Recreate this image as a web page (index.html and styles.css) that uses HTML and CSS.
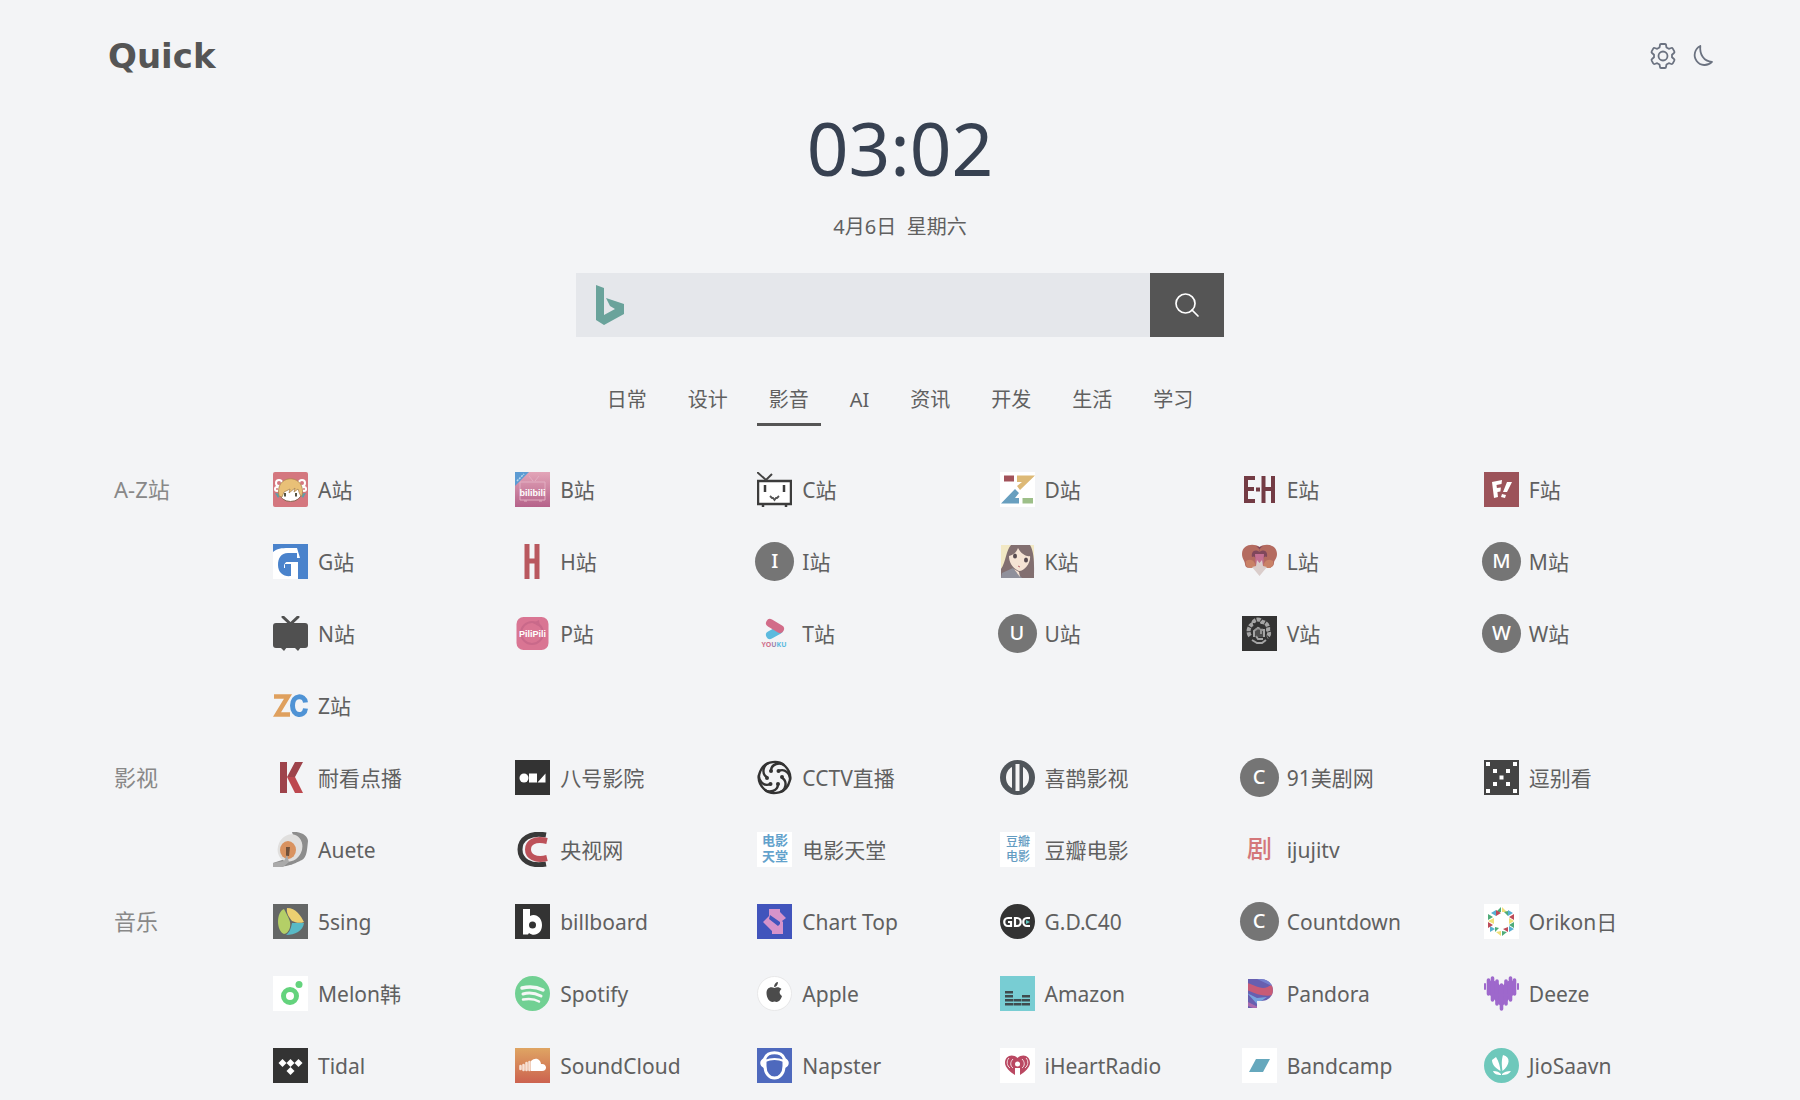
FILE: index.html
```html
<!DOCTYPE html>
<html lang="zh-CN">
<head>
<meta charset="utf-8">
<meta name="viewport" content="width=device-width, initial-scale=1">
<title>Quick</title>
<link rel="stylesheet" href="styles.css">
</head>
<body>
<header class="topbar">
  <a class="logo" href="#">Quick</a>
  <div class="tools">
    <button class="tool" type="button" aria-label="设置">
      <svg viewBox="0 0 26 26" width="26" height="26"><path d="M10 2q0-1 1-1h4q1 0 1 1l.5 2.500 2.300 1.300 2.500-.8q1-.3 1.500.6l1.500 2.800q.5 1-.3 1.600L22 11.700v2.600l2 1.700q.8.700.3 1.600l-1.500 2.800q-.5.900-1.500.6l-2.500-.8-2.300 1.300L16 24q0 1-1 1h-4q-1 0-1-1l-.5-2.500-2.300-1.300-2.500.8q-1 .3-1.500-.6l-1.500-2.800q-.5-1 .3-1.600L4 14.300v-2.600L2 10q-.8-.7-.3-1.600l1.500-2.800q.5-.9 1.500-.6l2.500.8 2.300-1.300z"/><circle cx="13" cy="13" r="4.500"/></svg>
    </button>
    <button class="tool" type="button" aria-label="夜间模式">
      <svg viewBox="0 0 24 24" width="24" height="24"><path d="M10.300 2A10 10 0 1 0 22 17.800C13.500 17.500 9.500 10 10.300 2z"/></svg>
    </button>
  </div>
</header>

<main>
  <time class="clock" datetime="03:02">03:02</time>
  <p class="date">4月6日&nbsp; 星期六</p>

  <form class="search" role="search">
    <svg class="engine" viewBox="0 0 30 40" width="30" height="40"><path d="M1 0l8 3v27l11-6-5-3-4-8 18 6v10L9 40l-8-5z"/></svg>
    <input class="search-input" type="text" aria-label="搜索">
    <button class="search-button" type="submit" aria-label="搜索">
      <svg viewBox="0 0 26 26" width="26" height="26"><circle cx="11.500" cy="11.500" r="9.500"/><path d="M18 18l6 6"/></svg>
    </button>
  </form>

  <nav class="tabs">
    <a class="tab" href="#">日常</a>
    <a class="tab" href="#">设计</a>
    <a class="tab active" href="#" aria-current="page">影音</a>
    <a class="tab" href="#">AI</a>
    <a class="tab" href="#">资讯</a>
    <a class="tab" href="#">开发</a>
    <a class="tab" href="#">生活</a>
    <a class="tab" href="#">学习</a>
  </nav>

  <section class="group">
    <h2 class="group-title">A-Z站</h2>
    <div class="sites">
      <a class="site" href="#"><span class="icon"><svg viewBox="0 0 35 35"><rect width="35" height="35" rx="2" fill="#d4777f"/><g fill="#fff"><circle cx="6" cy="11" r="4"/><circle cx="29" cy="11" r="4"/><circle cx="4" cy="17" r="3"/><circle cx="31" cy="17" r="3"/></g><g fill="#d4777f"><circle cx="6" cy="11" r="2"/><circle cx="29" cy="11" r="2"/><circle cx="4" cy="17" r="1"/><circle cx="31" cy="17" r="1"/></g><g fill="#5aa0ac"><path d="M2 21l6 1-3 4zM33 21l-6 1 3 4z"/></g><ellipse cx="17.500" cy="21" rx="11" ry="8.500" fill="#fff" stroke="#8b6a55"/><path d="M6 24C1 1 34 1 29 24c-2 0-3-4-4-7l-4 3 1-4-6 5 1-4-6 3-2 5z" fill="#e9c077" stroke="#a98450" stroke-width=".8"/><path d="M12 21v3.500M23 21v3.500" stroke="#554" stroke-width="2"/></svg></span>A站</a>
      <a class="site" href="#"><span class="icon"><svg viewBox="0 0 35 35"><defs><linearGradient id="pink" x2="0" y2="1"><stop stop-color="#e3a5b8"/><stop offset="1" stop-color="#b5628a"/></linearGradient></defs><rect width="35" height="35" fill="url(#pink)"/><path d="M18 9l-4-5M20 9l4-5M5 10h25v18H5zM9 29h3M24 29h3" fill="none" stroke="#e2afc2"/><path d="M0 0h14L0 14z" fill="#5c9bd3"/><path d="M2 9l7-7" stroke="#b9d8ee" stroke-width="1.500" stroke-dasharray="2 1"/><text x="17.500" y="24" class="wordmark">bilibili</text></svg></span>B站</a>
      <a class="site" href="#"><span class="icon"><svg viewBox="0 0 35 35"><rect x="1" y="9" width="33" height="23" fill="#fff" stroke="#3c3c3c" stroke-width="2.500"/><path d="M0 0l9 8 6-6" fill="none" stroke="#444" stroke-width="2"/><path d="M8 13v7M27 13v7M6 33v2M29 33v2" stroke="#3c3c3c" stroke-width="2.500"/><path d="M13 24l2 2h1l1.500 2 1.500-2h1l2-2" fill="none" stroke="#555" stroke-width="1.800"/></svg></span>C站</a>
      <a class="site" href="#"><span class="icon"><svg viewBox="0 0 35 35"><rect width="35" height="35" fill="#fff"/><path d="M4 3.500h10v6H4z" fill="#a2525a"/><path d="M17 3.500h18L20 18l-3-4 5-4h-5z" fill="#ddb976"/><path d="M1 31.500L15 17l4 4-4 5h4v5.500z" fill="#689fbf"/><path d="M22.500 26H33v5.500H22.500z" fill="#9dbf88"/></svg></span>D站</a>
      <a class="site" href="#"><span class="icon"><svg viewBox="0 0 35 35"><path d="M13 6H4v23h9M4 17h8M21.500 4v27M31 4v27M21 17h10M14 17.500h4" fill="none" stroke="#733b44" stroke-width="4"/></svg></span>E站</a>
      <a class="site" href="#"><span class="icon"><svg viewBox="0 0 35 35"><rect width="35" height="35" fill="#9c535a"/><path d="M8 10l10-2-.5 4-5 1 .4 3 4-.6-.5 4-3 .5.600 5-4 1zM23 10l5 0-5 10-4 0zM18 22l4 1-1 3-4-1z" fill="#fff"/></svg></span>F站</a>
      <a class="site" href="#"><span class="icon"><svg viewBox="0 0 35 35"><rect width="35" height="35" fill="#4a83cc"/><path d="M0 8C5 3 13 4 24 4l3 10H18c-1-6-9-1-9 6 0 9 4 8 6 8v-4h-4v-6h14v17H0z" fill="#fff"/><path d="M24 9h-9C8 9 5 14 5 21c0 8 6 12 13 11V20h-6v4h2v4c-4-1-5-10 2-11h8z" fill="#4a83cc"/></svg></span>G站</a>
      <a class="site" href="#"><span class="icon"><svg viewBox="0 0 35 35"><path d="M12 0v35M22 0v35M12 17h10" stroke="#b9585f" stroke-width="5"/></svg></span>H站</a>
      <a class="site" href="#"><span class="icon letter">I</span>I站</a>
      <a class="site" href="#"><span class="icon"><svg viewBox="0 0 35 35"><rect x="1" y="1" width="33" height="33" fill="#f2e8c4"/><path d="M11 1h19c5 8 4 23 4 33H1V25c5-7 5-19 10-24z" fill="#826f70"/><path d="M9 12c4-1 7-3 9-8 3 6 9 9 12 8 1 6-5 15-11 15-7-3-10-9-10-15z" fill="#f5e3d4"/><path d="M2 29l11-5 9 10H1z" fill="#8f909b"/><path d="M14 25l5 3 1 5z" fill="#f5e3d4"/><ellipse cx="15" cy="12" rx="2" ry="2.500" fill="#584b50"/><ellipse cx="26" cy="16" rx="2" ry="2.500" fill="#584b50"/><path d="M18 22l2 1" stroke="#b8676d"/></svg></span>K站</a>
      <a class="site" href="#"><span class="icon"><svg viewBox="0 0 35 35"><path d="M17.500 3C12-1 0 0 0 10c0 5 3 7 3 10 0 5 6 4 9 3h11c5 2 9 0 9-4 0-3 3-4 3-9 0-10-12-11-17.500-7z" fill="#b46b60"/><path d="M4 17c5-3 9 0 10 6-4 2-10 1-10-3zM31 17c-5-3-9 0-10 6 4 2 10 1 10-3z" fill="#c98166"/><path d="M14 2c4 3 4 4 3.500 6C12 4 9 9 10 13c3-2 4 2 5 6h5c1-4 2-8 5-6 1-4-2-9-7.500-5C17 6 17 5 21 2l-3.500 1z" fill="#80475b"/><path d="M13 10h9l-1 14h-7z" fill="#c46f91"/><path d="M10 23l4-1 1-6 2.500 3 2.500-3 1 6 4 1-7.500 9z" fill="#dacdcb"/></svg></span>L站</a>
      <a class="site" href="#"><span class="icon letter">M</span>M站</a>
      <a class="site" href="#"><span class="icon"><svg viewBox="0 0 35 35"><rect y="7" width="35" height="25" rx="3" fill="#505050"/><path d="M10 1l7.500 7L25 1" fill="none" stroke="#505050" stroke-width="3" stroke-linecap="round"/><path d="M7 31h7l-3 4zM21 31h7l-3 4z" fill="#505050"/></svg></span>N站</a>
      <a class="site" href="#"><span class="icon"><svg viewBox="0 0 35 35"><rect x="1.500" y="1" width="32" height="33" rx="7" fill="#d97593"/><circle cx="17" cy="17" r="11" fill="none" stroke="#c9698a" stroke-width="2"/><path d="M18 7l6-3 1 7" fill="#c9698a"/><text x="17.500" y="21" class="wordmark">PiliPili</text></svg></span>P站</a>
      <a class="site" href="#"><span class="icon"><svg viewBox="0 0 35 35"><path d="M13 19l9-5" stroke="#5cbade" stroke-width="8" stroke-linecap="round"/><path d="M13 7l10 6" stroke="#d26c89" stroke-width="8" stroke-linecap="round"/><text x="4.500" y="31" class="glyph-bold" font-size="7" fill="#d0708c">YO<tspan fill="#9a86ac">U</tspan><tspan fill="#5cbade">KU</tspan></text></svg></span>T站</a>
      <a class="site" href="#"><span class="icon letter">U</span>U站</a>
      <a class="site" href="#"><span class="icon"><svg viewBox="0 0 35 35"><rect width="35" height="35" fill="#333"/><g fill="none" stroke="#a5a5a5"><path d="M8 20c-3-4-1-11 3-12 0-5 7-6 9-2 4 0 7 4 6 8 2 3 1 6-1 7" stroke-width="4" stroke-dasharray="4 1"/><path d="M12 21v-6l4-3 2 1M19 18v-4h3v7M10 24l5 3h5l4-3M14 20l2 3h5" stroke-width="2"/></g><path d="M13 12h8v9h-8z" fill="#777" opacity=".4"/></svg></span>V站</a>
      <a class="site" href="#"><span class="icon letter">W</span>W站</a>
      <a class="site" href="#"><span class="icon"><svg viewBox="0 0 35 35"><path d="M1 8.500h14L4 26.500h13" fill="none" stroke="#dfa05e" stroke-width="4.500"/><path d="M32.500 14.500c-1-8-13-8-13 3s12 12 13 3" fill="none" stroke="#4f93d5" stroke-width="5"/></svg></span>Z站</a>
    </div>
  </section>

  <section class="group">
    <h2 class="group-title">影视</h2>
    <div class="sites">
      <a class="site" href="#"><span class="icon"><svg viewBox="0 0 35 35"><path d="M7 2h7v31H7zM22 2h8l-8 15h-8z" fill="#9e434b"/><path d="M14 17h8l8 16h-8z" fill="#bd484f"/></svg></span>耐看点播</a>
      <a class="site" href="#"><span class="icon"><svg viewBox="0 0 35 35"><rect width="35" height="35" fill="#333"/><circle cx="9" cy="18" r="4.500" fill="#fff"/><path d="M14 13.500h8v9h-8zM22.500 22.500l8-9v9z" fill="#fff"/></svg></span>八号影院</a>
      <a class="site" href="#"><span class="icon"><svg viewBox="0 0 35 35"><defs><path id="blade" d="M14 11C14 4 23 1 28 6c5 5 6 9 5 14"/></defs><g fill="none" stroke="#333" stroke-width="2.400"><use href="#blade"/><use href="#blade" transform="rotate(60 17.500 17.500)"/><use href="#blade" transform="rotate(120 17.500 17.500)"/><use href="#blade" transform="rotate(180 17.500 17.500)"/><use href="#blade" transform="rotate(240 17.500 17.500)"/><use href="#blade" transform="rotate(300 17.500 17.500)"/></g><g fill="#333"><circle cx="14" cy="11" r="2"/><circle cx="21.500" cy="11" r="2"/><circle cx="25" cy="17" r="2"/><circle cx="21" cy="24" r="2"/><circle cx="13.500" cy="24" r="2"/><circle cx="10" cy="18" r="2"/></g></svg></span>CCTV直播</a>
      <a class="site" href="#"><span class="icon"><svg viewBox="0 0 35 35"><circle cx="17.500" cy="17.500" r="17.500" fill="#50555a"/><path d="M12 7v21C4 24 4 11 12 7zM23 7v21c8-4 8-17 0-21zM15.500 4h4v27h-4z" fill="#f5f5f5"/></svg></span>喜鹊影视</a>
      <a class="site" href="#"><span class="icon letter">C</span>91美剧网</a>
      <a class="site" href="#"><span class="icon"><svg viewBox="0 0 35 35"><rect width="35" height="35" fill="#444"/><path d="M2 2h4v4H2zM29 2h4v4h-4zM9 9h4v4H9zM22 9h4v4h-4zM15.500 15.500h4v4h-4zM9 22h4v4H9zM22 22h4v4h-4zM2 29h4v4H2zM29 29h4v4h-4z" fill="#fff"/></svg></span>逗别看</a>
      <a class="site" href="#"><span class="icon"><svg viewBox="0 0 35 35"><path d="M19 0c9-1 16 4 16 9-1 9-1 16-6 19-7 3-11 7-29 7v-4l12-4 13-9z" fill="#8d8d8d"/><ellipse cx="17" cy="16" rx="12" ry="14" fill="#e0dfde" transform="rotate(25 17 16)"/><ellipse cx="15" cy="18" rx="8" ry="9" fill="#d9925f"/><path d="M13 15l4 0-1 9h-3z" fill="#72513a"/><path d="M0 31l11-2 3-6 2 7-6 5H0z" fill="#aaa"/></svg></span>Auete</a>
      <a class="site" href="#"><span class="icon"><svg viewBox="0 0 35 35"><path d="M31 3C15 0 5 7 5 17.500S15 35 31 32" fill="none" stroke="#393939" stroke-width="5"/><path d="M32 9C19 6 13 11 13 17.500S20 29 32 26" fill="none" stroke="#bd525a" stroke-width="6"/></svg></span>央视网</a>
      <a class="site" href="#"><span class="icon"><svg viewBox="0 0 35 35"><rect width="35" height="35" fill="#fff"/><text x="5" y="13" class="glyph-bold" font-size="13" fill="#63a2cc">电影<tspan x="5" y="29">天堂</tspan></text></svg></span>电影天堂</a>
      <a class="site" href="#"><span class="icon"><svg viewBox="0 0 35 35"><rect width="35" height="35" fill="#fff"/><text x="6" y="14" class="glyph-medium" font-size="12" fill="#639cc2">豆瓣<tspan x="6" y="29">电影</tspan></text></svg></span>豆瓣电影</a>
      <a class="site" href="#"><span class="icon"><svg viewBox="0 0 35 35"><text x="5" y="26" class="glyph-medium" font-size="25" fill="#d4777a">剧</text></svg></span>ijujitv</a>
    </div>
  </section>

  <section class="group">
    <h2 class="group-title">音乐</h2>
    <div class="sites">
      <a class="site" href="#"><span class="icon"><svg viewBox="0 0 35 35"><rect width="35" height="35" fill="#646666"/><path d="M11 5c-8 3-8 22 0 25 5-1 7-7 6-12-1-4-3-7-6-13z" fill="#b4cf67"/><path d="M14 4c9 0 14 8 17 14-5 2-9 0-12-1-3-4-6-8-5-13z" fill="#ecd071"/><path d="M31 19c-1 8-9 12-18 12 4-3 5-7 6-12z" fill="#58b9c6"/></svg></span>5sing</a>
      <a class="site" href="#"><span class="icon"><svg viewBox="0 0 35 35"><rect width="35" height="35" fill="#333"/><path d="M8 5h7v7c6-3 12 2 12 9 0 9-8 12-13 8l-1 1.500H8z" fill="#fff"/><circle cx="17.500" cy="21" r="3.500" fill="#333"/></svg></span>billboard</a>
      <a class="site" href="#"><span class="icon"><svg viewBox="0 0 35 35"><rect width="35" height="35" fill="#4154bc"/><path d="M12 5h11v3l6 6-4 3 1 1v12H15v-3l-9-9 6-6zM13 11l-1 4 9 7 2-2v-2z" fill="#d693ca" fill-rule="evenodd"/></svg></span>Chart Top</a>
      <a class="site" href="#"><span class="icon"><svg viewBox="0 0 35 35"><circle cx="17.500" cy="17.500" r="17.500" fill="#333"/><path d="M12 14H8c-5 0-5 8 0 8h3v-4H8M15 14v8h2c5 0 5-8 0-8zM30 14h-3c-5 0-5 8 0 8h3" fill="none" stroke="#fff" stroke-width="2.200"/><path d="M26 16l4 2-4 2z" fill="#5ac4bd"/></svg></span>G.D.C40</a>
      <a class="site" href="#"><span class="icon letter">C</span>Countdown</a>
      <a class="site" href="#"><span class="icon"><svg viewBox="0 0 35 35"><rect width="35" height="35" fill="#fff"/><g fill="#57b0d1"><path d="M12 6v6l-5-3zM29 9l-5-3v6zM6 22l5 3-5 3zM25 22v6l5-3z"/></g><g fill="#f0df78"><path d="M18 3v5h5zM4 17l6-3v6zM30 17l-5-3v6zM17 27v5l-5-4z"/></g><g fill="#4fab79"><path d="M17 3v5h-5zM4 10l5 3-5 3zM30 18v6l-5-3zM18 27v5l5-4zM20 8l4 4v-5zM11 23v5l4-4z"/></g><g fill="#bd4b58"><path d="M12 6l5 3-5 3zM30 10v6l-5-3zM4 18l5 3-5 3zM24 23v5l-5-3z"/></g></svg></span>Orikon日</a>
      <a class="site" href="#"><span class="icon"><svg viewBox="0 0 35 35"><rect width="35" height="35" fill="#fff"/><circle cx="17" cy="20" r="6.500" fill="none" stroke="#64d37d" stroke-width="5"/><circle cx="26" cy="8.500" r="3.500" fill="#64d37d"/></svg></span>Melon韩</a>
      <a class="site" href="#"><span class="icon"><svg viewBox="0 0 35 35"><circle cx="17.500" cy="17.500" r="17.500" fill="#71d093"/><g fill="none" stroke="#f5f7f6" stroke-linecap="round"><path d="M7 12c8-2 15-1 21 2" stroke-width="3.500"/><path d="M8 18c7-2 12-1 18 2" stroke-width="3"/><path d="M8 23.500c6-1 11-1 16 2" stroke-width="2.500"/></g></svg></span>Spotify</a>
      <a class="site" href="#"><span class="icon"><svg viewBox="0 0 35 35"><circle cx="17.500" cy="17.500" r="17" fill="#fff" stroke="#e7e7e8"/><path d="M17.500 12c-4-2-8 0-8 5s3 9 6 9l2-.6 2 .6c3 0 5-4 5.500-6-3-2-3-5-.5-7-2-2-5-2-7-1z" fill="#4b4b4b"/><path d="M17 11c0-3 2-5 4-5 0 3-2 5-4 5z" fill="#4b4b4b"/></svg></span>Apple</a>
      <a class="site" href="#"><span class="icon"><svg viewBox="0 0 35 35"><rect width="35" height="35" fill="#78cdd3"/><path d="M9 15v15M17.500 23v7M26 19v11" stroke="#3f4b4e" stroke-width="8" stroke-dasharray="2.500 1.500"/></svg></span>Amazon</a>
      <a class="site" href="#"><span class="icon"><svg viewBox="0 0 35 35"><defs><clipPath id="p"><path d="M6 3h12c17 0 17 22 1 22h-4v7H6z"/></clipPath></defs><g clip-path="url(#p)"><path d="M0 0h35v35H0z" fill="#675fb0"/><path d="M5 7c8 2 17 10 26 0v12c-9 2-17-1-26-5z" fill="#c85b76"/><path d="M5 17l10 5 10-1-10 7z" fill="#77a3dc"/><path d="M15 3l15 7V2z" fill="#7480cf"/><path d="M6 26l10 5v3l-10-4z" fill="#a96aad"/></g></svg></span>Pandora</a>
      <a class="site" href="#"><span class="icon"><svg viewBox="0 0 35 35"><path d="M3 7l5-3 5 2 4.500 5L22 6l5-2 5 3v9L17.500 31 3 16z" fill="#9e68cc"/><g stroke="#9e68cc" stroke-width="3.600" stroke-linecap="round"><path d="M4.500 4v14M8.500 2v22M13 5v23M17.500 9v24M22 5v23M26.500 2v22M30.500 4v14"/><path d="M1 8v5M34 8v5" stroke-width="2"/></g></svg></span>Deeze</a>
      <a class="site" href="#"><span class="icon"><svg viewBox="0 0 35 35"><rect width="35" height="35" fill="#333"/><path d="M9.500 11l4 4-4 4-4-4zM17.500 11l4 4-4 4-4-4zM25.500 11l4 4-4 4-4-4zM17.500 19l4 4-4 4-4-4z" fill="#fff"/></svg></span>Tidal</a>
      <a class="site" href="#"><span class="icon"><svg viewBox="0 0 35 35"><defs><linearGradient id="cloud" x2="0" y2="1"><stop stop-color="#dfa563"/><stop offset="1" stop-color="#cc624f"/></linearGradient></defs><rect width="35" height="35" fill="url(#cloud)"/><path d="M16 13c5-5 10-1 10 3 6-1 7 7 1 7H16z" fill="#fff"/><path d="M5.500 18v3M8.500 17v5M11.500 15v7M14.500 14v8" stroke="#f7e1d5" stroke-width="2.600" stroke-linecap="round"/></svg></span>SoundCloud</a>
      <a class="site" href="#"><span class="icon"><svg viewBox="0 0 35 35"><rect width="35" height="35" fill="#4e69bd"/><path d="M8 10c3-7 16-7 19 0v8c0 16-19 16-19 0z" fill="none" stroke="#fff" stroke-width="3"/><path d="M8 13c7-3 12-3 19 0" fill="none" stroke="#fff" stroke-width="2"/><path d="M7 10c-5 2-5 8 0 10zM28 10c5 2 5 8 0 10z" fill="#fff"/></svg></span>Napster</a>
      <a class="site" href="#"><span class="icon"><svg viewBox="0 0 35 35"><rect width="35" height="35" fill="#fff"/><path d="M17.500 10C12 5 5 8 5 15c0 4 5 9 10 12v-7h5v7c5-3 10-8 10-12 0-7-7-10-12.500-5z" fill="#ba4862"/><circle cx="17.500" cy="16" r="2.500" fill="#fff"/><path d="M13 11c-3 3-3 7 0 9M22 11c3 3 3 7 0 9M9 10c-3 3-2 8 1 10M26 10c3 3 2 8-1 10" fill="none" stroke="#f2dce1"/></svg></span>iHeartRadio</a>
      <a class="site" href="#"><span class="icon"><svg viewBox="0 0 35 35"><rect width="35" height="35" fill="#fff"/><path d="M14 11h14l-7 13H7z" fill="#66a8bd"/></svg></span>Bandcamp</a>
      <a class="site" href="#"><span class="icon"><svg viewBox="0 0 35 35"><circle cx="17.500" cy="17.500" r="17.500" fill="#6ec8bb"/><path d="M18.500 23c-1-7-1-11 .5-16 8 2 7 10-.5 16zM16.500 23C11 20 8 16 8 12l4-3c3 5 4 9 4.500 14zM17 27c-4 0-7-1-8-4 4 0 6 1 8 3zM18 27c4 0 7-1 9-4-4 0-7 1-9 3z" fill="#fff"/></svg></span>JioSaavn</a>
    </div>
  </section>
</main>
</body>
</html>
```
FILE: styles.css
```css
* {
  box-sizing: border-box;
}

body {
  margin: 0;
  background: #f3f4f6;
  color: #606060;
  font-family: "Noto Sans", "Noto Sans CJK SC", sans-serif;
  font-size: 20px;
  line-height: 30px;
}

a {
  color: inherit;
  text-decoration: none;
}

button {
  padding: 0;
  border: 0;
  background: none;
  cursor: pointer;
}

svg {
  display: block;
}

.topbar {
  display: flex;
  align-items: center;
  justify-content: space-between;
  padding: 36px 86px 0 108px;
}

.logo {
  color: #555;
  font: bold 34px/40px "DejaVu Sans", sans-serif;
}

.tools {
  display: flex;
  align-items: center;
  gap: 14px;
}

.tool svg {
  fill: none;
  stroke: #6b7280;
  stroke-width: 1.8;
  stroke-linejoin: round;
}

.clock {
  display: block;
  margin-top: 24px;
  color: #374151;
  font-size: 73px;
  line-height: 96px;
  text-align: center;
}

.date {
  margin: 16px 0 0;
  text-align: center;
}

.search {
  display: flex;
  align-items: center;
  width: 36%;
  min-width: 320px;
  margin: 31px auto 0;
  background: #e5e7eb;
}

.engine {
  flex: none;
  margin: 0 14px 0 19px;
  fill: #6aa39b;
}

.search-input {
  flex: 1;
  min-width: 0;
  height: 64px;
  padding: 0;
  border: 0;
  outline: 0;
  background: transparent;
  color: inherit;
  font: inherit;
}

.search-button {
  display: grid;
  place-items: center;
  width: 74px;
  height: 64px;
  background: #555;
}

.search-button svg {
  fill: none;
  stroke: #fff;
  stroke-width: 1.7;
  stroke-linecap: round;
}

.tabs {
  display: flex;
  flex-wrap: wrap;
  justify-content: center;
  gap: 17px;
  margin: 48px 0 27px;
}

.tab {
  padding: 0 12px 8px;
  border-bottom: 3px solid transparent;
}

.tab.active {
  border-color: #555;
}

.group {
  display: grid;
  grid-template-columns: 157px 1fr;
  padding: 0 76px 0 114px;
}

.group-title {
  margin: 0;
  color: #888;
  font-size: 22px;
  font-weight: 400;
  line-height: 72px;
}

.sites {
  display: grid;
  grid-template-columns: repeat(6, 1fr);
}

.site {
  display: flex;
  align-items: center;
  gap: 8px;
  height: 72px;
  padding-top: 2px;
  font-size: 21px;
  white-space: nowrap;
}

.icon {
  display: grid;
  flex: none;
  place-items: center;
  width: 39px;
  height: 39px;
  margin-bottom: 2px;
}

.icon svg {
  width: 35px;
  height: 35px;
}

.letter {
  border-radius: 50%;
  background: #757575;
  color: #fff;
  font-size: 20px;
  font-weight: 500;
}

.glyph-bold {
  font-weight: 700;
}

.glyph-medium {
  font-weight: 500;
}

.wordmark {
  fill: #fff;
  font-family: "Liberation Sans", sans-serif;
  font-size: 9px;
  font-weight: 700;
  text-anchor: middle;
}
```
